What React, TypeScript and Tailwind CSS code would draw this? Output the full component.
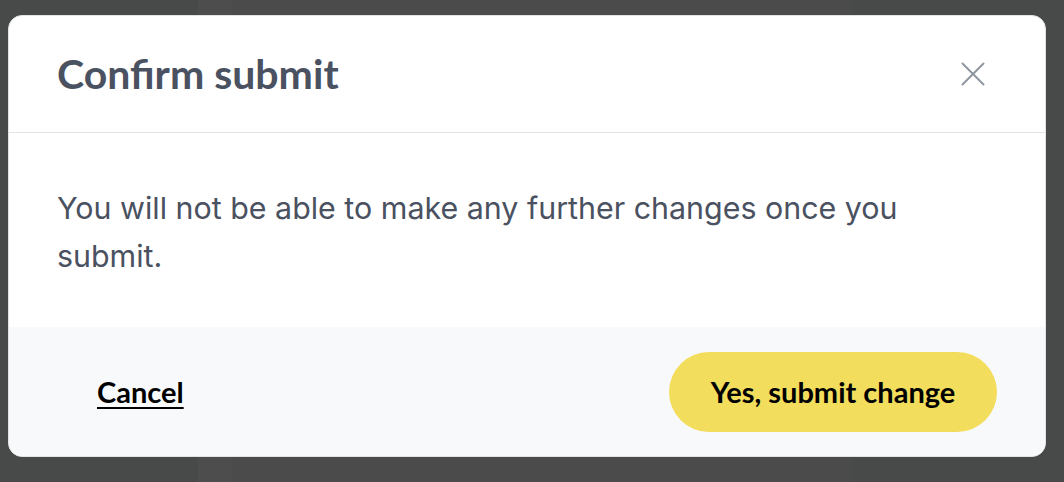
import React from 'react';
import { X } from 'lucide-react';

export default function App() {
  return (
    <div className="relative w-[1064px] h-[482px] overflow-hidden bg-[#4b4b4b]">
      <div className="flex h-full">
        <div className="w-[198px] bg-[#484a49]" />
        <div className="w-[34px] bg-[#4d4d4d]" />
        <div className="flex-1 bg-[#4b4b4b]" />
        <div className="w-[212px] bg-[#484a49]" />
      </div>
      <ConfirmDialog />
    </div>
  );
}

function ConfirmDialog() {
  return (
    <div className="absolute left-[8px] top-[15px] w-[1038px] h-[442px] flex flex-col overflow-hidden rounded-[14px] border border-[#e2e3e6] bg-white">
      <div className="flex items-center justify-between h-[117px] pl-[48px] pr-[51px] border-b border-[#e2e3e6]">
        <h2 className="font-['Lato',sans-serif] font-bold text-[41px] text-[#4a5160]">Confirm submit</h2>
        <X className="w-[42px] h-[42px] text-[#9097a1]" strokeWidth={1.15} />
      </div>
      <div className="flex-1 pl-[48px] pr-[60px] pt-[51px]">
        <p className="font-['Inter',sans-serif] text-[30.4px] leading-[48px] text-[#4a5160]">
          You will not be able to make any further changes once you submit.
        </p>
      </div>
      <div className="flex items-center justify-between h-[129px] bg-[#f8f9fa] pl-[88px] pr-[48px]">
        <button className="font-['Lato',sans-serif] font-bold text-[29px] text-black underline decoration-2 underline-offset-4">Cancel</button>
        <button className="h-[80px] w-[328px] rounded-full bg-[#f2dd5c] font-['Lato',sans-serif] font-bold text-[29px] text-black">
          Yes, submit change
        </button>
      </div>
    </div>
  );
}
